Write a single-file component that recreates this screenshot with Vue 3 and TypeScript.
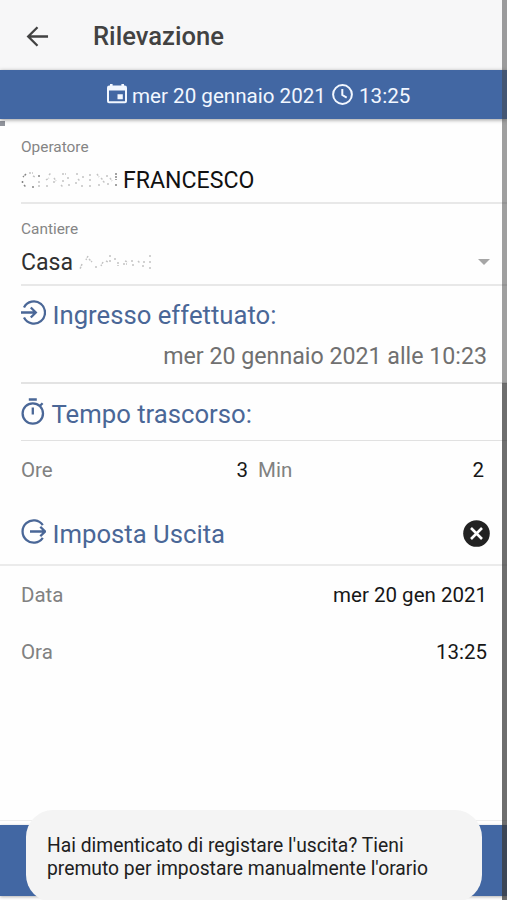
<script setup lang="ts">
interface TimeRow {
  label: string
  value: string
}

const exitRows: TimeRow[] = [
  { label: 'Data', value: 'mer 20 gen 2021' },
  { label: 'Ora', value: '13:25' },
]
const hours: number = 3
const minutes: number = 2
</script>

<template>
  <div class="screen">
    <header class="toolbar">
      <svg class="back" viewBox="0 0 24 24"><path d="M23 12H2.5M12 2.3L2.3 12L12 21.7" /></svg>
      <h1>Rilevazione</h1>
    </header>

    <div class="datebar">
      <svg class="calendar" viewBox="0 0 20 20">
        <path fill-rule="evenodd" d="M3 0h2.6v1.6h8.8V0H17v1.6h.8A2.2 2.2 0 0 1 20 3.8v13.4a2 2 0 0 1-2 2H2a2 2 0 0 1-2-2V3.8a2.2 2.2 0 0 1 2.2-2.2H3zM2 6.6v10.6h16V6.6zM10.5 10.3h5.3v5h-5.3z" />
      </svg>
      <span class="day">mer 20 gennaio 2021</span>
      <svg class="clock" viewBox="0 0 21 21"><circle cx="10.5" cy="10.5" r="9.4" /><path d="M10.3 5v6l4.4 2.6" /></svg>
      <span class="hour">13:25</span>
    </div>

    <main>
      <i class="progress"></i>
      <section class="field operator">
        <label>Operatore</label>
        <div class="value strong">
          <svg class="erased first" viewBox="0 0 98 20">
            <path class="dark" d="M5 4l-3 3M1.5 11v2M3 15l2 2M11 17h2M18 5v2M95 3v7M95 14v2" />
            <path d="M8 3h4M12 6l2 1M18 11v2M18 15v2M28 5l2-2M25 10l3-2M32 12h3M26 15v2M33 8l2 3M41 4h4M47 7v2M41 11h3M48 14v2M40 15l2 2M55 4h3M62 6v2M55 12v2M60 16h3M57 9l2 2M69 4v2M69 9v3M69 15v2M76 4l2 3M82 11l2 2M86 5v3M89 8l2 3M78 14v2M80 8l2 2M87 13v3" />
          </svg>
          <span>FRANCESCO</span>
        </div>
      </section>
      <section class="field site">
        <label>Cantiere</label>
        <div class="value">
          <span>Casa</span>
          <svg class="erased second" viewBox="0 0 74 20">
            <path d="M9 4l-2 4M10 7l3 3M3 12l-2 5M16 15h2M24 10l-2 4M27 9l2 1M31 8v3M31 3v2M36 6v3M39 10v4M44 12h4M46 9l3 1M52 9h2M54 12v3M59 9l2 2M64 13v2M65 9v2M71 3v3M71 9v3M71 15v2" />
          </svg>
          <i class="caret"></i>
        </div>
      </section>

      <section class="entry">
        <h2>
          <svg class="icon" viewBox="0 0 25 25"><path d="M3 7.5A11.1 11.1 0 1 1 3 17.5M0 12.5h14.5M9.8 7.5l5 5l-5 5" /></svg>
          <span>Ingresso effettuato:</span>
        </h2>
        <p>mer 20 gennaio 2021 alle 10:23</p>
      </section>

      <section class="elapsed">
        <h2>
          <svg class="icon timer" viewBox="0 0 24 27"><circle cx="11.8" cy="15.5" r="10.2" /><path d="M7.8 1.5h8M11.8 9.5v7M19 7.8l2.6-2.6" /></svg>
          <span>Tempo trascorso:</span>
        </h2>
      </section>
      <section class="duration">
        <div class="row"><span>Ore</span><b>{{ hours }}</b></div>
        <div class="row"><span>Min</span><b>{{ minutes }}</b></div>
      </section>

      <section class="exit">
        <h2>
          <svg class="icon" viewBox="0 0 25 25"><path d="M21.8 6.2A11.1 11.1 0 1 0 21.8 18.8M9 12.5h15M19.3 7.8l4.7 4.7l-4.7 4.7" /></svg>
          <span>Imposta Uscita</span>
        </h2>
        <svg class="clear" viewBox="0 0 27 27"><circle cx="13.5" cy="13.5" r="13.3" /><path d="M8 8l11 11M19 8L8 19" /></svg>
      </section>
      <div v-for="row in exitRows" :key="row.label" class="row exit-row">
        <span>{{ row.label }}</span><b>{{ row.value }}</b>
      </div>
    </main>

    <footer></footer>
    <div class="toast">Hai dimenticato di registare l'uscita? Tieni<br />premuto per impostare manualmente l'orario</div>
    <div class="scrollbar"><i></i></div>
  </div>
</template>

<style>
body {
  margin: 0;
  background: #fefefe;
}
</style>

<style scoped>
* {
  box-sizing: border-box;
}
.screen {
  position: relative;
  display: flex;
  flex-direction: column;
  width: 507px;
  height: 900px;
  overflow: hidden;
  background: #fefefe;
  font-family: Roboto, sans-serif;
  color: #202020;
}
svg {
  display: block;
  flex: none;
  fill: none;
  stroke: currentColor;
}
h1, h2, p {
  margin: 0;
  white-space: nowrap;
}
.toolbar {
  display: flex;
  align-items: center;
  flex: none;
  height: 70px;
  padding-left: 26px;
  background: #f7f7f8;
  color: #424242;
}
.back {
  width: 23px;
  height: 23px;
  margin-top: 2px;
  stroke-width: 2.4;
}
h1 {
  margin: 2px 0 0 44px;
  font-size: 25.6px;
  font-weight: 500;
  line-height: 30px;
}
.datebar {
  z-index: 1;
  display: flex;
  align-items: center;
  flex: none;
  height: 49px;
  padding: 4px 0 0 107px;
  background: #4267a3;
  box-shadow: 0 1px 4px rgba(0, 0, 0, 0.4);
  color: #f2f7ff;
  font-size: 20.6px;
  line-height: 25px;
  white-space: nowrap;
}
.calendar {
  width: 20px;
  height: 20px;
  margin-top: -5px;
  fill: currentColor;
  stroke: none;
}
.day {
  width: 194px;
  margin-left: 5px;
}
.clock {
  width: 21px;
  height: 21px;
  margin: -5px 0 0 6px;
  stroke-width: 2;
}
.hour {
  margin-left: 6px;
}
main {
  position: relative;
  flex: none;
  height: 702px;
  border-bottom: 1px solid #ededed;
}
.progress {
  position: absolute;
  top: 2px;
  left: 0;
  width: 5px;
  height: 5px;
  background: #91949c;
}
.field {
  height: 82px;
  margin-left: 21px;
  border-bottom: 2px solid #e8e8e8;
}
.operator {
  height: 85px;
  padding-top: 18px;
}
.site {
  padding-top: 15px;
}
label {
  display: block;
  color: #858585;
  font-size: 15.4px;
  line-height: 20px;
}
.value {
  display: flex;
  align-items: center;
  height: 28px;
  margin-top: 9px;
  font-size: 23.1px;
  color: #303030;
}
.strong {
  color: #111;
}
.erased {
  height: 20px;
  color: #c4c4c4;
  stroke-width: 1.5;
  stroke-dasharray: 2 1;
}
.first {
  width: 98px;
  margin-right: 4px;
}
.dark {
  color: #858585;
}
.second {
  width: 74px;
  margin-left: 6px;
}
.caret {
  margin: 0 17px 0 auto;
  border: 6.5px solid transparent;
  border-top-color: #a6a6a6;
  border-bottom: 0;
}
h2 {
  display: flex;
  align-items: center;
  color: #4a6797;
  font-size: 25.7px;
  font-weight: 400;
  line-height: 32px;
}
h2 span {
  margin-left: 6.5px;
}
.icon {
  width: 25px;
  height: 25px;
  margin-top: -5px;
  stroke-width: 2.3;
}
.timer {
  width: 24px;
  height: 27px;
}
.entry {
  height: 98px;
  margin-left: 21px;
  padding-top: 13px;
  border-bottom: 2px solid #e3e3e3;
}
.entry p {
  padding: 9px 20px 0 0;
  color: #707070;
  font-size: 23.2px;
  line-height: 32px;
  text-align: right;
}
.elapsed {
  height: 57px;
  margin-left: 21px;
  padding-top: 14px;
  border-bottom: 1px solid #e1e1e1;
}
.duration {
  display: grid;
  grid-template-columns: 227px 226px;
  gap: 10px;
  height: 58px;
  margin-left: 21px;
}
.row {
  display: flex;
  align-items: center;
  justify-content: space-between;
  font-size: 20.5px;
}
.row span {
  color: #818181;
}
.row b {
  font-weight: 400;
  color: #171717;
}
.exit {
  display: flex;
  align-items: center;
  justify-content: space-between;
  height: 67px;
  padding: 4px 17px 0 21px;
  border-bottom: 2px solid #ebebeb;
}
.clear {
  width: 27px;
  height: 27px;
  fill: #222;
  stroke: none;
}
.clear path {
  stroke: #fff;
  stroke-width: 2.6;
}
.exit-row {
  height: 57px;
  padding: 0 20px 0 21px;
}
footer {
  flex: none;
  height: 71px;
  margin-top: 4px;
  background: #4267a3;
  box-shadow: 0 1px 3px rgba(0, 0, 0, 0.3);
}
.toast {
  position: absolute;
  z-index: 2;
  top: 810px;
  left: 26px;
  width: 456px;
  height: 92px;
  padding: 25px 21px;
  border-radius: 27px;
  background: #f4f4f4;
  color: #202020;
  font-size: 19.3px;
  line-height: 22.5px;
  white-space: nowrap;
}
.scrollbar {
  position: absolute;
  z-index: 3;
  top: 0;
  right: 0;
  width: 5px;
  height: 900px;
  background: rgba(70, 70, 70, 0.52);
}
.scrollbar i {
  display: block;
  height: 517px;
  margin-top: 383px;
  background: rgba(50, 50, 50, 0.45);
}
</style>
